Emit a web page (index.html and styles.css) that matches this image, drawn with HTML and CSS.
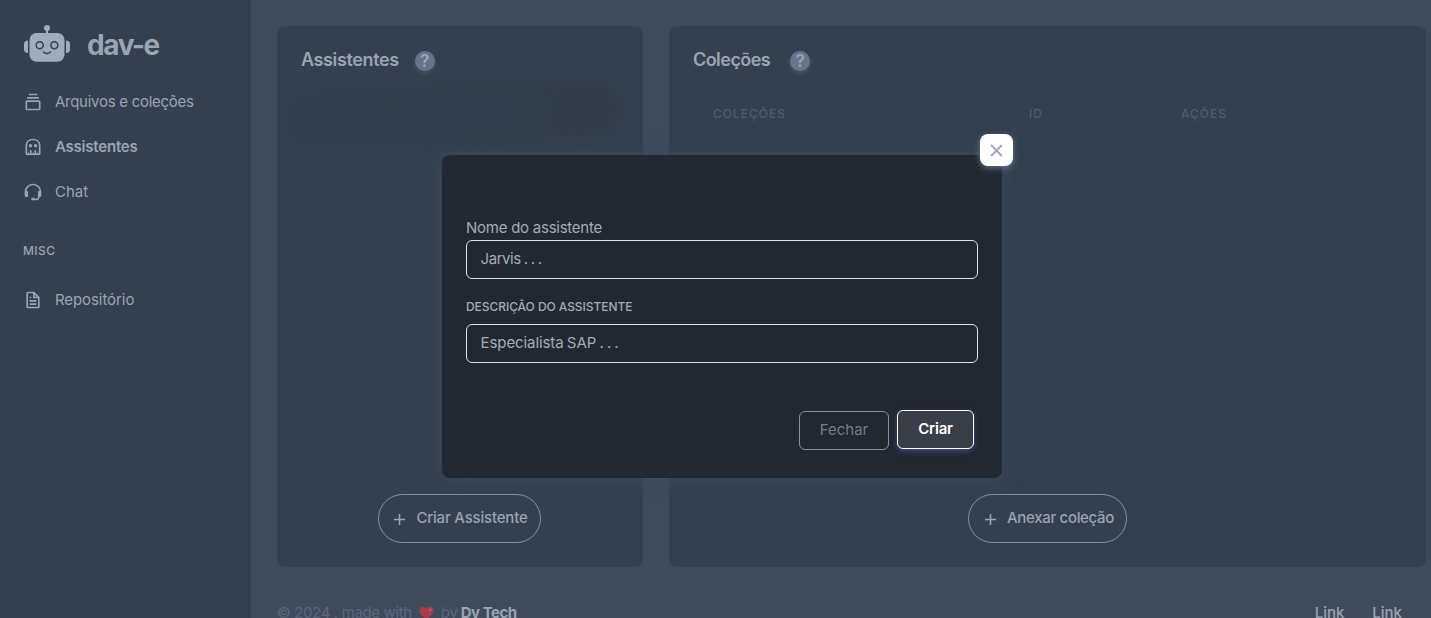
FILE: index.html
```html
<!DOCTYPE html>
<html lang="pt-BR">
<head>
<meta charset="utf-8">
<title>dav-e</title>
<link rel="stylesheet" href="styles.css">
</head>
<body>
<div class="layout">
  <aside class="sidebar">
    <div class="brand">
      <svg class="brand-logo" width="48" height="40" viewBox="0 0 48 40">
        <circle cx="24" cy="3" r="3"/>
        <rect x="23" y="4" width="2" height="7"/>
        <rect x="6.500" y="8" width="35" height="28.800" rx="7"/>
        <path d="M5 15.500v12.500C2.200 28 1 26.500 1 24.300v-5c0-2.300 1.200-3.800 4-3.800zM43 15.500v12.500c2.800 0 4-1.500 4-3.700v-5c0-2.300-1.200-3.800-4-3.800z"/>
        <g class="brand-face">
          <circle cx="16.700" cy="20.200" r="3.500"/>
          <circle cx="31.300" cy="20.200" r="3.500"/>
          <path d="M20.500 27q3.500 3.200 7 0"/>
        </g>
      </svg>
      <span class="brand-name">dav-e</span>
    </div>
    <nav class="menu">
      <a class="menu-item"><svg class="icon" viewBox="0 0 24 24"><path d="M19 10H5c-1.103 0-2 .897-2 2v8c0 1.103.897 2 2 2h14c1.103 0 2-.897 2-2v-8c0-1.103-.897-2-2-2zM5 20v-8h14l.002 8H5zM5 6h14v2H5zM7 2h10v2H7z"/></svg><span class="t-files">Arquivos e coleções</span></a>
      <a class="menu-item active"><svg class="icon" viewBox="0 0 24 24"><path class="ghost" d="M4 20V10.500C4 6 7.500 3 12 3s8 3 8 7.500V20q-1.300 1.600-2.700 0-1.300 1.600-2.600 0-1.350 1.600-2.700 0-1.350 1.600-2.700 0-1.300 1.600-2.600 0Q5.300 21.600 4 20zM9.300 20v-4M14.700 20v-4"/><circle cx="9" cy="10.500" r="2"/><circle cx="15" cy="10.500" r="2"/></svg><span class="t-active">Assistentes</span></a>
      <a class="menu-item"><svg class="icon" viewBox="0 0 24 24"><path d="M12 2C6.486 2 2 6.486 2 12v4.143C2 17.167 2.897 18 4 18h1a1 1 0 0 0 1-1v-5.143a1 1 0 0 0-1-1h-.908C4.648 6.987 7.978 4 12 4s7.352 2.987 7.908 6.857H19a1 1 0 0 0-1 1V18c0 1.103-.897 2-2 2h-2v-1h-4v3h6c2.206 0 4-1.794 4-4 1.103 0 2-.833 2-1.857V12c0-5.514-4.486-10-10-10z"/></svg><span class="t-chat">Chat</span></a>
      <h6 class="menu-header">MISC</h6>
      <a class="menu-item"><svg class="icon" viewBox="0 0 24 24"><path d="M19.903 8.586a.997.997 0 0 0-.196-.293l-6-6a.997.997 0 0 0-.293-.196c-.03-.014-.062-.022-.094-.033a.991.991 0 0 0-.259-.051C13.040 2.011 13.021 2 13 2H6c-1.103 0-2 .897-2 2v16c0 1.103.897 2 2 2h12c1.103 0 2-.897 2-2V9c0-.021-.011-.040-.013-.062a.952.952 0 0 0-.051-.259c-.01-.032-.019-.063-.033-.093zM16.586 8H14V5.414L16.586 8zM6 20V4h6v5a1 1 0 0 0 1 1h5l.002 10H6z"/><path d="M8 12h8v2H8zm0 4h8v2H8zm0-8h2v2H8z"/></svg><span class="t-repo">Repositório</span></a>
    </nav>
  </aside>
  <main class="content">
    <div class="cards">
      <section class="card card-assistants">
        <header class="card-head"><h5 class="t-card-a">Assistentes</h5><span class="help">?</span></header>
        <div class="blurred-row"></div>
        <button class="pill pill-create"><svg class="plus" viewBox="0 0 12 12"><path d="M6 0v12M0 6h12"/></svg><span class="t-create">Criar Assistente</span></button>
      </section>
      <section class="card card-collections">
        <header class="card-head"><h5 class="t-card-c">Coleções</h5><span class="help help-wide">?</span></header>
        <div class="table-head"><span>COLEÇÕES</span><span>ID</span><span>AÇÕES</span></div>
        <button class="pill pill-attach"><svg class="plus" viewBox="0 0 12 12"><path d="M6 0v12M0 6h12"/></svg><span class="t-attach">Anexar coleção</span></button>
      </section>
    </div>
    <footer class="footer">
      <div class="credit"><span class="t-made">© 2024 , made with</span><svg class="heart" viewBox="0 0 16 15"><path d="M8 14.500C4 12 .8 8.500.5 5.200.3 2.500 2 .8 4.200.8 6 .8 7.400 1.900 8 3.300 8.600 1.900 10 .8 11.800.8c2.200 0 3.900 1.700 3.700 4.400C15.200 8.500 12 12 8 14.500z"/><ellipse class="heart-shine" cx="12.100" cy="4" rx="1.400" ry="1.700"/></svg><span class="t-by">by</span><b class="t-tech">Dv Tech</b></div>
      <div class="links"><a>Link</a><a>Link</a></div>
    </footer>
  </main>
</div>
<div class="overlay">
  <form class="modal">
    <button type="button" class="close"><svg viewBox="0 0 12 12"><path d="M1 1l10 10M11 1L1 11"/></svg></button>
    <label class="label"><span class="t-name">Nome do assistente</span></label>
    <div class="field"><span class="t-jarvis">Jarvis . . .</span></div>
    <label class="label label-caps"><span class="t-desc">DESCRIÇÃO DO ASSISTENTE</span></label>
    <div class="field"><span class="t-sap">Especialista SAP . . .</span></div>
    <div class="actions">
      <button type="button" class="btn btn-close"><span class="t-fechar">Fechar</span></button>
      <button type="button" class="btn btn-create"><span class="t-criar">Criar</span></button>
    </div>
  </form>
</div>
</body>
</html>
```
FILE: styles.css
```css
* { box-sizing: border-box; }
body { margin: 0; height: 618px; overflow: hidden; background: #3f4b5b; color: #98a5b3; font: 15px/23px Inter, "Liberation Sans", sans-serif; }
button { font: inherit; color: inherit; background: none; margin: 0; }
h5, h6 { margin: 0; }
span, a, b { white-space: nowrap; }
.layout { display: flex; height: 618px; }
.sidebar { width: 251px; flex: none; background: #34404f; }
.brand { display: flex; align-items: flex-start; height: 79px; padding: 25px 0 0 23px; }
.brand-logo { fill: #a1acba; }
.brand-face { fill: none; stroke: #34404f; stroke-width: 1.5; stroke-linecap: round; }
.brand-name { margin-left: 16px; font-size: 28px; line-height: 40px; font-weight: 700; letter-spacing: -1.4px; }
.menu-item { display: flex; align-items: center; height: 45px; padding-left: 23px; }
.icon { width: 20px; height: 20px; margin: 1px 12px 0 0; fill: #98a5b3; }
.ghost { fill: none; stroke: #98a5b3; stroke-width: 2; }
.active { font-weight: 600; }
.t-files { letter-spacing: -0.27px; }
.t-active { letter-spacing: -0.22px; }
.t-repo { letter-spacing: -0.08px; }
.menu-header { height: 63px; padding: 23px 0 0 23px; font-size: 12px; line-height: 28px; font-weight: 500; letter-spacing: 0.4px; }
.content { flex: 1; padding: 26px 5px 0 26px; }
.cards { display: flex; gap: 26px; }
.card { display: flex; flex-direction: column; height: 541px; border-radius: 8px; background: #34404f; padding: 24px; }
.card-assistants { width: 366px; }
.card-collections { flex: 1; }
.card-head { display: flex; height: 24px; align-items: flex-start; }
.card-head h5 { font-size: 18px; line-height: 20px; font-weight: 600; }
.t-card-a { letter-spacing: -0.38px; }
.t-card-c { letter-spacing: -0.55px; }
.help { display: grid; place-items: center; width: 20px; height: 20px; margin: 1px 0 0 16px; border-radius: 50%; background: #65758c; color: #a1acba; font-size: 17px; line-height: 20px; font-weight: 500; box-shadow: 0 2px 4px #48586d; }
.help-wide { margin-left: 20px; }
.blurred-row { width: 336px; height: 52px; margin: 13px 0 0 -17px; border-radius: 28px; background: linear-gradient(90deg, #333f4e, #323e4c 25%, #323e4b 65%, #323d49 90%); filter: blur(5px); transform: rotate(-2deg); }
.pill { display: flex; align-items: center; justify-content: center; height: 49px; margin-top: auto; border: 1px solid #8592a2; border-radius: 25px; font-weight: 500; padding: 0 0 2px; align-self: center; }
.pill-create { width: 163px; margin-right: 2px; }
.pill-attach { width: 159px; }
.plus { width: 11px; height: 11px; margin: 3px 11px 0 4px; stroke: #98a5b3; stroke-width: 1.7; }
.t-create { letter-spacing: -0.19px; }
.t-attach { letter-spacing: -0.32px; }
.table-head { display: grid; grid-template-columns: 316px 152px auto; padding: 28px 0 0 20px; font-size: 12px; font-weight: 500; letter-spacing: 1px; color: #4a5d76; }
.footer { display: flex; justify-content: space-between; padding: 35px 24px 0 0; height: 60px; line-height: 22px; }
.credit { display: flex; color: #57687e; }
.t-made { letter-spacing: -0.36px; }
.t-by { letter-spacing: -0.2px; }
.credit b { color: #98a5b3; font-weight: 700; margin-left: 3px; letter-spacing: -0.5px; }
.heart { width: 15px; height: 14px; margin: 4px 7px 0 7px; fill: #a93c4c; }
.heart-shine { fill: #b05a66; }
.links { display: flex; gap: 28px; font-weight: 500; }
.overlay { position: absolute; inset: 0; display: flex; justify-content: center; align-items: flex-start; padding: 155px 0 0 13px; }
.modal { position: relative; width: 560px; height: 323px; padding: 61px 24px 0; border-radius: 8px; background: #222831; color: #a3acb7; box-shadow: 0 2px 20px #3b4a5f; }
.close { position: absolute; right: -11px; top: -21px; width: 33px; height: 32px; padding: 0 1px 0 0; border: 0; border-radius: 8px; background: #fff; display: grid; place-items: center; box-shadow: 0 2px 6px #65758c; }
.close svg { width: 13px; height: 13px; fill: none; stroke: #a1acb8; stroke-width: 1.9; }
.label { display: block; height: 24px; line-height: 23px; }
.t-name { letter-spacing: -0.25px; }
.t-jarvis { letter-spacing: -0.42px; word-spacing: -0.8px; }
.t-sap { letter-spacing: -0.08px; word-spacing: -0.9px; }
.field { display: flex; align-items: center; height: 39px; width: 512px; padding: 0 14px 2px 13.5px; border: 1px solid #e1e4e8; border-radius: 6px; }
.label-caps { height: 45px; padding-top: 16px; font-size: 12px; font-weight: 500; }
.t-desc { letter-spacing: -0.06px; }
.actions { display: flex; justify-content: flex-end; gap: 8px; padding: 47px 4px 0 0; }
.btn { height: 39px; border-radius: 6px; padding: 0 0 2px; border: 1px solid #8592a3; }
.btn-close { width: 90px; margin-top: 1px; color: #6f7d8d; }
.btn-create { width: 77px; background: #3a3e47; border-color: #fff; color: #fff; font-weight: 600; box-shadow: 0 2px 5px #45478c; }
.t-criar { letter-spacing: -0.25px; }
```
